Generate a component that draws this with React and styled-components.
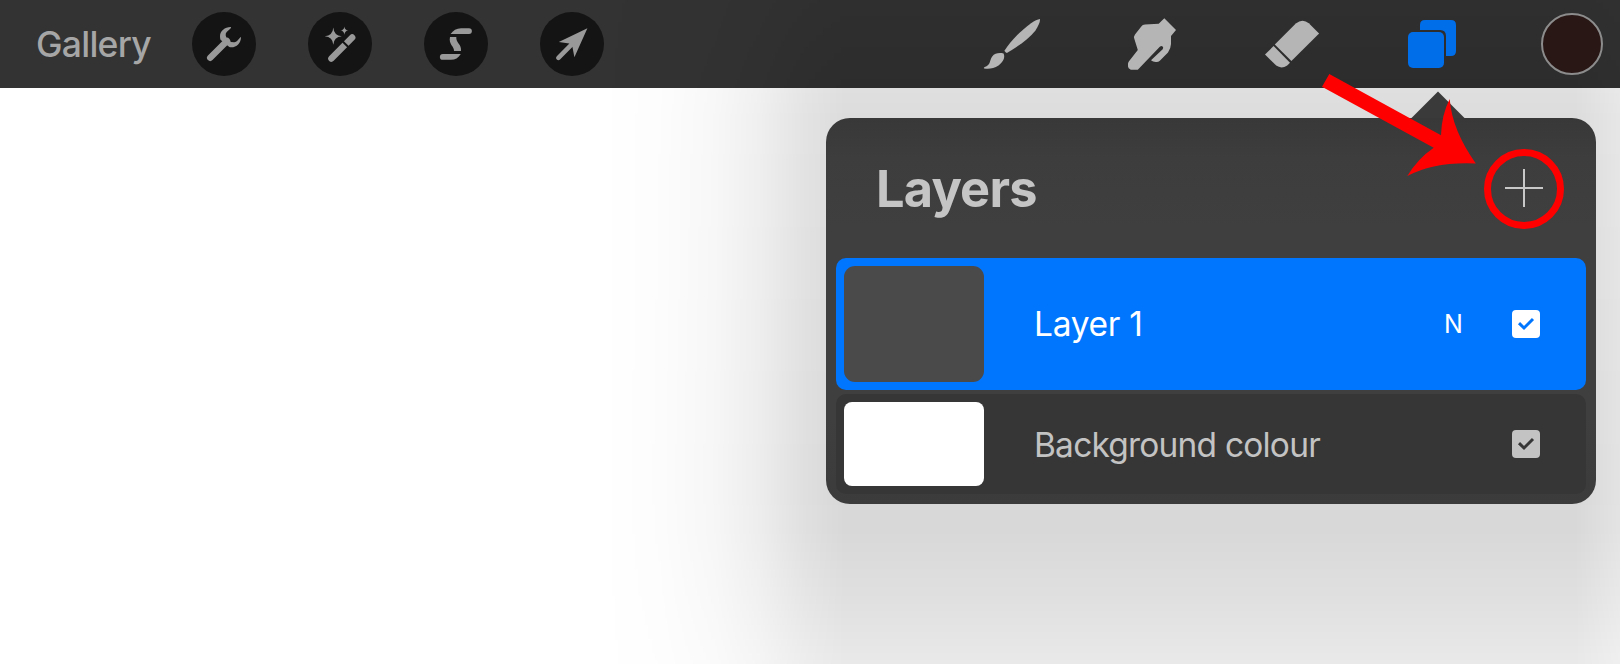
import React from "react";
import styled, { createGlobalStyle, css } from "styled-components";

const Global = createGlobalStyle`
  * { box-sizing: border-box; }
  body { margin: 0; background: #fff; overflow: hidden; font-family: Inter, "Liberation Sans", sans-serif; }
`;

const Screen = styled.div`
  position: relative;
  width: 1620px;
  height: 664px;
  background: #fff;
  overflow: hidden;
`;

const Toolbar = styled.header`
  display: flex;
  justify-content: space-between;
  align-items: center;
  height: 88px;
  padding: 0 16px 0 36px;
  background: #333;
`;

const Group = styled.div`
  display: flex;
  align-items: center;
  gap: ${(p) => p.$gap}px;
`;

const Gallery = styled.span`
  width: 156px;
  padding-top: 2px;
  font-size: 35.5px;
  font-weight: 500;
  line-height: 44px;
  letter-spacing: -0.75px;
  color: #a6a6a6;
`;

const RoundButton = styled.button`
  display: block;
  width: 64px;
  height: 64px;
  padding: 0;
  border: 0;
  border-radius: 50%;
  background: #141414;
  color: #999;
`;

const ToolButton = styled.button`
  position: relative;
  z-index: 2;
  display: block;
  width: 64px;
  height: 64px;
  padding: 0;
  border: 0;
  background: none;
  color: ${(p) => (p.$active ? "#006de9" : "#b5b5b5")};
`;

const Glyph = styled.svg`
  display: block;
  width: 64px;
  height: 64px;
  fill: currentColor;
`;

const Swatch = styled.div`
  width: 62px;
  height: 62px;
  margin: 0 1px;
  border: 2px solid #8c8c8c;
  border-radius: 50%;
  background: #281715;
  position: relative;
  z-index: 2;
`;

const Shade = styled.div`
  position: absolute;
  inset: 0;
  pointer-events: none;
  background: linear-gradient(
    to bottom,
    rgba(0, 0, 0, 0.07) 0,
    rgba(0, 0, 0, 0.124) 88px,
    rgba(0, 0, 0, 0.136) 118px,
    rgba(0, 0, 0, 0.155) 480px,
    rgba(0, 0, 0, 0.153) 530px,
    rgba(0, 0, 0, 0.12) 600px,
    rgba(0, 0, 0, 0.085) 664px
  );
  mask-image: linear-gradient(
    to right,
    transparent 600px,
    rgba(0, 0, 0, 0.07) 660px,
    rgba(0, 0, 0, 0.22) 715px,
    rgba(0, 0, 0, 0.46) 760px,
    rgba(0, 0, 0, 0.8) 805px,
    #000 845px,
    #000 1575px,
    rgba(0, 0, 0, 0.7) 1620px
  );
`;

const Workspace = styled.main`
  display: flex;
  justify-content: flex-end;
  padding: 30px 24px 0 0;
`;

const Panel = styled.section`
  position: relative;
  z-index: 1;
  width: 770px;
  height: 386px;
  padding: 0 10px;
  border-radius: 24px;
  background: linear-gradient(#383838, #3d3d3d 40px, #3f3f3f 110px, #3f3f3f 300px, #3b3b3b);
`;

const Pointer = styled.svg`
  position: absolute;
  right: 131px;
  top: -27px;
  width: 54px;
  height: 27px;
  fill: #3a3a3a;
`;

const PanelHeader = styled.div`
  display: flex;
  justify-content: space-between;
  align-items: center;
  height: 140px;
  padding: 0 43px 0 40px;
`;

const Title = styled.h1`
  margin: 2px 0 0;
  font-size: 50.5px;
  line-height: 60px;
  font-weight: 700;
  letter-spacing: -0.8px;
  color: #c5c5c5;
`;

const AddButton = styled.button`
  width: 38px;
  height: 38px;
  padding: 0;
  border: 0;
  background: linear-gradient(#c8c8c8, #c8c8c8) center / 38px 2px no-repeat,
    linear-gradient(#c8c8c8, #c8c8c8) center / 2px 38px no-repeat;
`;

const LayerList = styled.div`
  display: flex;
  flex-direction: column;
  gap: 4px;
`;

const Row = styled.div`
  display: flex;
  align-items: center;
  height: ${(p) => (p.$selected ? 132 : 100)}px;
  padding: 0 46px 0 8px;
  border-radius: 10px;
  ${(p) =>
    p.$selected
      ? css`background: #0076ff; color: #fff;`
      : css`background: #363636; color: #c3c3c3;`}
`;

const Thumb = styled.div`
  width: 140px;
  height: ${(p) => (p.$blank ? 84 : 116)}px;
  border-radius: ${(p) => (p.$blank ? 8 : 11)}px;
  background: ${(p) => (p.$blank ? "#fff" : "#4a4a4a")};
`;

const Name = styled.span`
  flex: 1;
  padding: ${(p) => p.$drop}px 0 0 50px;
  font-size: 33.5px;
  line-height: 42px;
  letter-spacing: ${(p) => p.$tracking}px;
`;

const Blend = styled.span`
  width: 19px;
  margin-right: 49px;
  text-align: center;
  font-size: 25px;
  line-height: 30px;
`;

const Check = styled.svg`
  display: block;
  width: 28px;
  height: 28px;
  margin-top: ${(p) => p.$shift}px;
  border-radius: 4px;
  background: currentColor;
  fill: none;
  stroke: ${(p) => p.$mark};
  stroke-width: 3;
`;

const Callout = styled.svg`
  position: absolute;
  z-index: 3;
  left: 1310px;
  top: 64px;
  width: 270px;
  height: 176px;
  pointer-events: none;
`;

const Icon = ({ children }) => <Glyph viewBox="0 0 64 64">{children}</Glyph>;

const actions = [
  {
    label: "Actions",
    icon: (
      <>
        <path d="M38.8 15.1C33 15 28 19 28 24.3Q28 26.3 28.5 27.8L37.3 35.1C43.4 36.5 49 31.5 49 25.2Q49 24.5 48.2 25.5L45.3 28.8Q44 30.4 42 30.2L39 29.9L34.8 26.6L33.7 23.5Q33.4 21.5 34.7 20.1L38.5 16.4Q39.6 15.3 38.8 15.1Z" />
        <path d="M18.2 45.8L35 29" fill="none" stroke="currentColor" strokeWidth="6.4" strokeLinecap="round" />
      </>
    ),
  },
  {
    label: "Adjustments",
    icon: (
      <>
        <path d="M25.3 15.5Q25.8 23.5 33.8 24.2Q25.8 24.9 25.3 32.8Q24.8 24.9 16.8 24.2Q24.8 23.5 25.3 15.5Z" />
        <path d="M36.4 14.6Q36.7 18.3 40.4 18.6Q36.7 18.9 36.4 22.7Q36.1 18.9 32.4 18.6Q36.1 18.3 36.4 14.6Z" />
        <path d="M23.4 46.6L44.2 25.5" fill="none" stroke="currentColor" strokeWidth="6.4" strokeLinecap="round" />
        <path d="M34.5 29.3L40.8 35.5" stroke="#141414" strokeWidth="2" />
      </>
    ),
  },
  {
    label: "Selection",
    icon: (
      <>
        <path d="M26.6 22C29 18.5 32.5 16.2 37 16.2H45A2.9 2.9 0 0 1 45 22Z" />
        <path d="M26 25H32.3C31.8 31 37.8 32 37 39H30C30.5 34.5 24.3 32.5 26 25Z" />
        <path d="M18.8 42H36.8C34.5 46 31 47.8 27 47.8H18.8A2.9 2.9 0 0 1 18.8 42Z" />
      </>
    ),
  },
  {
    label: "Transform",
    icon: (
      <>
        <path d="M47.4 16.2L34.4 45.2L32.4 34.8L29.2 31.5L18.8 29.9Z" />
        <path d="M18.4 45.8L33 31.2" fill="none" stroke="currentColor" strokeWidth="4.6" strokeLinecap="round" />
      </>
    ),
  },
];

const tools = [
  {
    label: "Paint",
    icon: (
      <>
        <path d="M60 7Q60.4 10.6 55.5 18.5C49.5 26 39 34 26.9 41Q25.5 40.7 24.4 38.7C31 28.5 41 18.5 51 11.2Q56.5 7.6 60 7Z" />
        <path d="M23.6 41.5C25.3 45.5 23.5 49.6 18.5 53.5C13.8 57 8.2 57 4.2 56.5Q3.3 56 4.3 55.3C11.5 52.3 9.2 48.3 12.2 44.4C14.8 41 19.4 40.6 23.6 41.5Z" />
      </>
    ),
  },
  {
    label: "Smudge",
    icon: (
      <path d="M44.3 6.2L56 18L51 24V32Q50.8 36.8 48 40.4L39.8 48.7Q38.5 50 36.5 50Q33 50.2 31 48.3L42.7 37.3Q43.8 35.5 42.6 34.4Q41.3 33.6 39.8 34.8L17.8 57.8H10.8Q8 56.5 8 54.6V51.6Q8.1 50.5 9 49.3L17.8 38L14.3 26.8Q13.6 24.5 15 22.6L21.3 14.5Q22.5 12.6 25 12.5L38.7 11.8Z" />
    ),
  },
  {
    label: "Erase",
    icon: (
      <>
        <path d="M14.8 32.6L35.8 11.4Q42.6 6 48.8 11.2L59.1 21.4L31.4 49.1Z" />
        <path d="M13.6 34.1L30 50.7L27.2 53.5Q21.5 57.2 16.2 53.6L5 42.5Z" />
      </>
    ),
  },
  {
    label: "Layers",
    active: true,
    icon: (
      <>
        <path d="M20 18V13Q20 8 25 8H51Q56 8 56 13V39Q56 44 51 44H46V24Q46 18 40 18Z" />
        <rect x="8" y="20" width="36" height="36" rx="5" />
      </>
    ),
  },
];

const CheckBox = ({ mark, shift = 0 }) => (
  <Check $mark={mark} $shift={shift} viewBox="0 0 28 28">
    <path d="M7 13.2L12 18L21 9" />
  </Check>
);

export default function App() {
  return (
    <Screen>
      <Global />
      <Toolbar>
        <Group $gap={0}>
          <Gallery>Gallery</Gallery>
          <Group $gap={52}>
            {actions.map((a) => (
              <RoundButton key={a.label} aria-label={a.label}>
                <Icon>{a.icon}</Icon>
              </RoundButton>
            ))}
          </Group>
        </Group>
        <Group $gap={76}>
          {tools.map((t) => (
            <ToolButton key={t.label} aria-label={t.label} $active={t.active}>
              <Icon>{t.icon}</Icon>
            </ToolButton>
          ))}
          <Swatch />
        </Group>
      </Toolbar>
      <Shade />
      <Workspace>
        <Panel>
          <Pointer viewBox="0 0 54 27">
            <path d="M0.500 27L27 0.500L53.500 27Z" />
          </Pointer>
          <PanelHeader>
            <Title>Layers</Title>
            <AddButton aria-label="Add layer" />
          </PanelHeader>
          <LayerList>
            <Row $selected>
              <Thumb />
              <Name $tracking={-0.3} $drop={0}>Layer 1</Name>
              <Blend>N</Blend>
              <CheckBox mark="#0076ff" />
            </Row>
            <Row>
              <Thumb $blank />
              <Name $tracking={-0.8} $drop={2}>Background colour</Name>
              <CheckBox mark="#363636" />
            </Row>
          </LayerList>
        </Panel>
      </Workspace>
      <Callout viewBox="1310 64 270 176">
        <path
          fill="#f00"
          d="M1329.3 74L1441 135.3Q1441.5 115 1449.7 99Q1452 130 1475.8 163.4Q1434 161.500 1407.3 176Q1418 158.500 1433.7 147.8L1322 86.700Z"
        />
        <circle cx="1524" cy="189" r="36.500" fill="none" stroke="#f00" strokeWidth="7" />
      </Callout>
    </Screen>
  );
}
